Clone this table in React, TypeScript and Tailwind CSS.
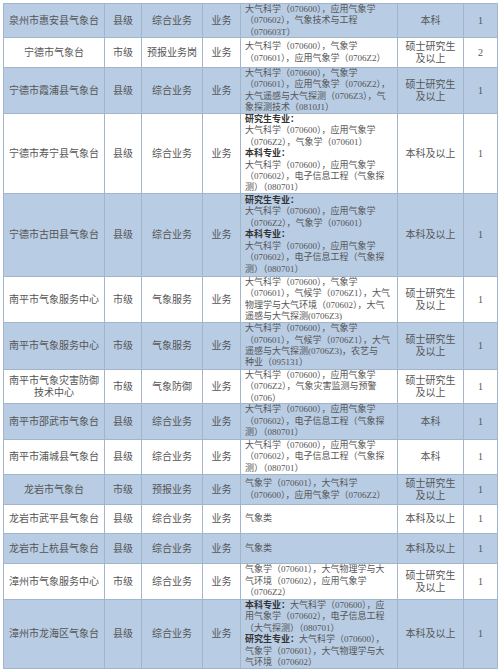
import type { ReactNode } from "react";

type Row = {
  unit: ReactNode;
  level: string;
  post: string;
  kind: string;
  major: ReactNode;
  edu: ReactNode;
  count: string;
  h: number;
};

const B = ({ children }: { children: ReactNode }) => (
  <span className="font-bold text-[#333]">{children}</span>
);

const lines = (...ls: ReactNode[]) =>
  ls.map((l, i) => (
    <div key={i} className="whitespace-nowrap">
      {l}
    </div>
  ));

const MASTER = (
  <>
    硕士研究生
    <br />
    及以上
  </>
);

const gradUnder = lines(
  <B>研究生专业：</B>,
  "大气科学（070600），应用气象学",
  "（0706Z2），气象学（070601）",
  <B>本科专业：</B>,
  "大气科学（070600），应用气象学",
  "（070602），电子信息工程（气象探",
  "测）（080701）"
);

const underOnly = lines(
  "大气科学（070600），应用气象学",
  "（070602），电子信息工程（气象探",
  "测）（080701）"
);

const rows: Row[] = [
  {
    unit: "泉州市惠安县气象台", level: "县级", post: "综合业务", kind: "业务",
    major: lines("大气科学（070600），应用气象学", "（070602），气象技术与工程", "（070603T）"),
    edu: "本科", count: "1", h: 34,
  },
  {
    unit: "宁德市气象台", level: "市级", post: "预报业务岗", kind: "业务",
    major: lines("大气科学（070600），气象学", "（070601），应用气象学（0706Z2）"),
    edu: MASTER, count: "2", h: 30,
  },
  {
    unit: "宁德市霞浦县气象台", level: "县级", post: "综合业务", kind: "业务",
    major: lines(
      "大气科学（070600），气象学",
      "（070601），应用气象学（0706Z2），",
      "大气遥感与大气探测（0706Z3），气",
      "象探测技术（0810J1）"
    ),
    edu: MASTER, count: "1", h: 46,
  },
  { unit: "宁德市寿宁县气象台", level: "县级", post: "综合业务", kind: "业务", major: gradUnder, edu: "本科及以上", count: "1", h: 80 },
  { unit: "宁德市古田县气象台", level: "县级", post: "综合业务", kind: "业务", major: gradUnder, edu: "本科及以上", count: "1", h: 83 },
  {
    unit: "南平市气象服务中心", level: "市级", post: "气象服务", kind: "业务",
    major: lines(
      "大气科学（070600），气象学",
      "（070601），气候学（0706Z1），大气",
      "物理学与大气环境（070602），大气",
      "遥感与大气探测(0706Z3)"
    ),
    edu: MASTER, count: "1", h: 46,
  },
  {
    unit: "南平市气象服务中心", level: "市级", post: "气象服务", kind: "业务",
    major: lines(
      "大气科学（070600），气象学",
      "（070601），气候学（0706Z1），大气",
      "遥感与大气探测(0706Z3)，农艺与",
      "种业（095131）"
    ),
    edu: MASTER, count: "1", h: 47,
  },
  {
    unit: (
      <>
        南平市气象灾害防御
        <br />
        技术中心
      </>
    ),
    level: "市级", post: "气象防御", kind: "业务",
    major: lines("大气科学（070600），应用气象学", "（0706Z2），气象灾害监测与预警", "（0706）"),
    edu: MASTER, count: "1", h: 34,
  },
  { unit: "南平市邵武市气象台", level: "县级", post: "综合业务", kind: "业务", major: underOnly, edu: "本科", count: "1", h: 36 },
  { unit: "南平市浦城县气象台", level: "县级", post: "综合业务", kind: "业务", major: underOnly, edu: "本科", count: "1", h: 35 },
  {
    unit: "龙岩市气象台", level: "市级", post: "预报业务", kind: "业务",
    major: lines("气象学（070601），大气科学", "（070600），应用气象学（0706Z2）"),
    edu: MASTER, count: "1", h: 30,
  },
  { unit: "龙岩市武平县气象台", level: "县级", post: "综合业务", kind: "业务", major: "气象类", edu: "本科及以上", count: "1", h: 29 },
  { unit: "龙岩市上杭县气象台", level: "县级", post: "综合业务", kind: "业务", major: "气象类", edu: "本科及以上", count: "1", h: 30 },
  {
    unit: "漳州市气象服务中心", level: "市级", post: "综合业务", kind: "业务",
    major: lines("气象学（070601），大气物理学与大", "气环境（070602），应用气象学", "（0706Z2）"),
    edu: MASTER, count: "1", h: 36,
  },
  {
    unit: "漳州市龙海区气象台", level: "县级", post: "综合业务", kind: "业务",
    major: lines(
      <>
        <B>本科专业：</B>大气科学（070600），应
      </>,
      "用气象学（070602），电子信息工程",
      "（大气探测）（080701）",
      <>
        <B>研究生专业：</B>大气科学（070600），
      </>,
      "气象学（070601），大气物理学与大",
      "气环境（070602）"
    ),
    edu: "本科及以上", count: "1", h: 69,
  },
];

export default function App() {
  return (
    <div
      className="w-[500px] h-[672px] bg-white pt-[3px] pl-[3px] overflow-hidden text-[#555]"
      style={{ fontFamily: '"Liberation Serif", "Noto Sans CJK SC", serif' }}
    >
      <table className="table-fixed border-collapse w-[494px] text-[10px] leading-[11.6px]">
        <colgroup>
          <col className="w-[101px]" />
          <col className="w-[37px]" />
          <col className="w-[61px]" />
          <col className="w-[38px]" />
          <col className="w-[157px]" />
          <col className="w-[66px]" />
          <col className="w-[34px]" />
        </colgroup>
        <tbody>
          {rows.map((r, i) => (
            <tr
              key={i}
              className={i % 2 === 0 ? "bg-[#b8cce4]" : "bg-white"}
              style={{ height: r.h }}
            >
              <td className="border border-[#a3b5ca] text-center p-0">{r.unit}</td>
              <td className="border border-[#a3b5ca] text-center p-0">{r.level}</td>
              <td className="border border-[#a3b5ca] text-center p-0">{r.post}</td>
              <td className="border border-[#a3b5ca] text-center p-0">{r.kind}</td>
              <td className="border border-[#a3b5ca] pl-[4px] pr-0 py-0 text-[9px] leading-[11.4px] overflow-hidden">
                <div className="overflow-hidden" style={{ maxHeight: r.h - 1 }}>{r.major}</div>
              </td>
              <td className="border border-[#a3b5ca] text-center p-0">{r.edu}</td>
              <td className="border border-[#a3b5ca] text-center p-0">{r.count}</td>
            </tr>
          ))}
        </tbody>
      </table>
    </div>
  );
}
